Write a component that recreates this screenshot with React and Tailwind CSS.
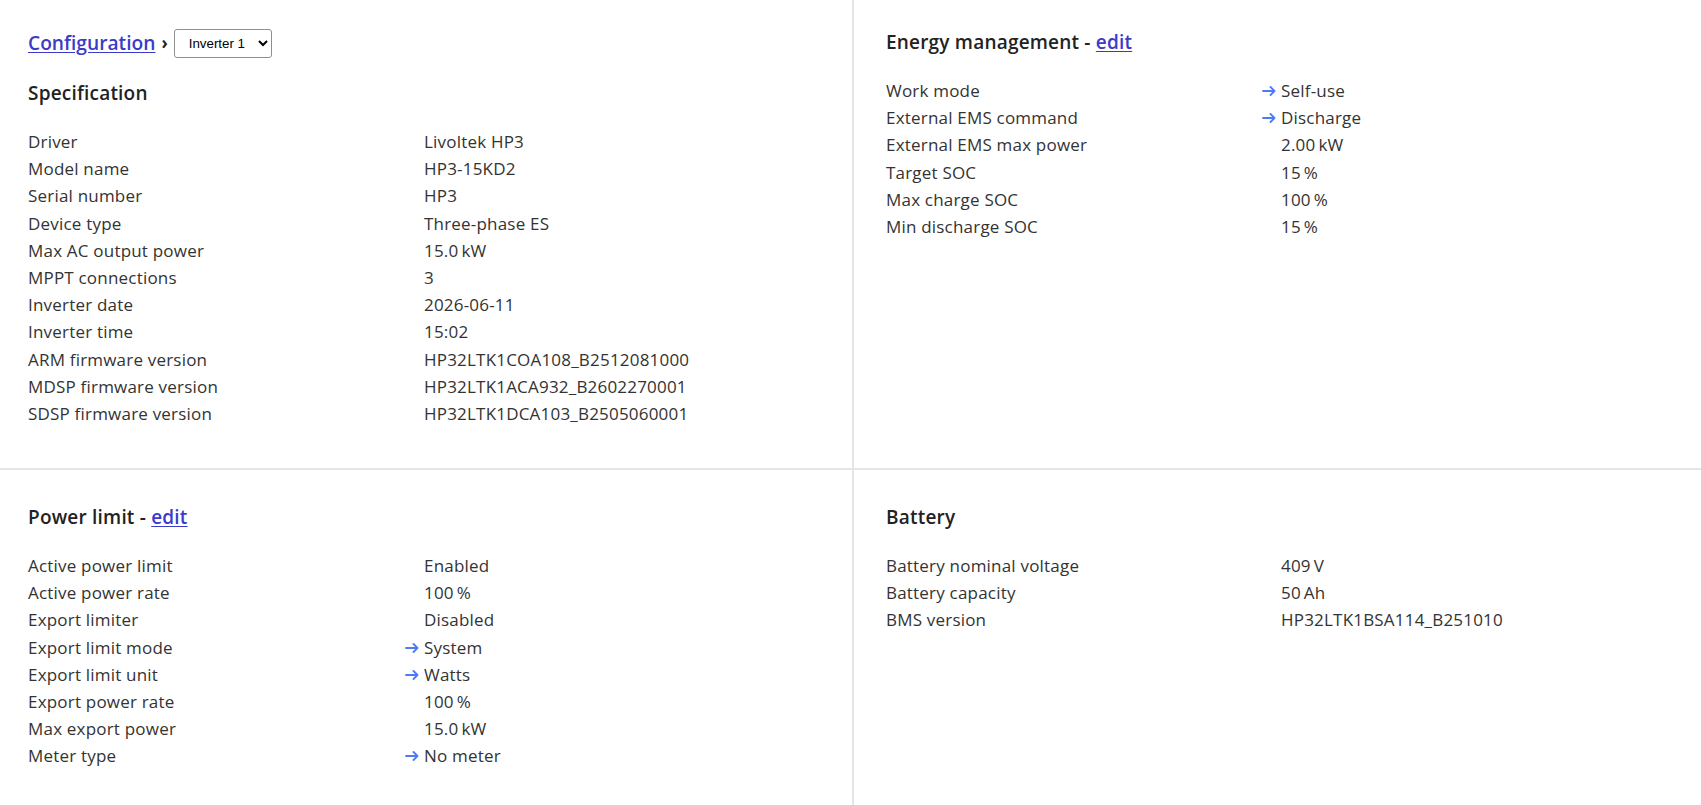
import React from "react";

const F = { fontFamily: "'Open Sans', 'Noto Sans', sans-serif" };

function Arrow() {
  return (
    <svg
      className="absolute right-full mr-[5px] top-[9px]"
      width="14"
      height="10"
      viewBox="0 0 14 10"
      fill="none"
      stroke="#4b7bf5"
      strokeWidth="1.8"
      strokeLinecap="round"
      strokeLinejoin="round"
    >
      <path d="M1 5h11.5M8.5 1l4 4-4 4" />
    </svg>
  );
}

function Row({ label, value, arrow }) {
  return (
    <>
      <div className="leading-[27.2px]">{label}</div>
      <div className="relative leading-[27.2px]">
        {arrow && <Arrow />}
        {value}
      </div>
    </>
  );
}

function Table({ rows, col }) {
  return (
    <div className={`grid ${col} text-[17px] tracking-[0.2px] text-[#333]`}>
      {rows.map((r) => (
        <Row key={r[0]} label={r[0]} value={r[1]} arrow={r[2]} />
      ))}
    </div>
  );
}

const T = "\u2009";

const spec = [
  ["Driver", "Livoltek HP3"],
  ["Model name", "HP3-15KD2"],
  ["Serial number", "HP3"],
  ["Device type", "Three-phase ES"],
  ["Max AC output power", `15.0${T}kW`],
  ["MPPT connections", "3"],
  ["Inverter date", "2026-06-11"],
  ["Inverter time", "15:02"],
  ["ARM firmware version", "HP32LTK1COA108_B2512081000"],
  ["MDSP firmware version", "HP32LTK1ACA932_B2602270001"],
  ["SDSP firmware version", "HP32LTK1DCA103_B2505060001"],
];

const energy = [
  ["Work mode", "Self-use", true],
  ["External EMS command", "Discharge", true],
  ["External EMS max power", `2.00${T}kW`],
  ["Target SOC", `15${T}%`],
  ["Max charge SOC", `100${T}%`],
  ["Min discharge SOC", `15${T}%`],
];

const power = [
  ["Active power limit", "Enabled"],
  ["Active power rate", `100${T}%`],
  ["Export limiter", "Disabled"],
  ["Export limit mode", "System", true],
  ["Export limit unit", "Watts", true],
  ["Export power rate", `100${T}%`],
  ["Max export power", `15.0${T}kW`],
  ["Meter type", "No meter", true],
];

const battery = [
  ["Battery nominal voltage", `409${T}V`],
  ["Battery capacity", `50${T}Ah`],
  ["BMS version", "HP32LTK1BSA114_B251010"],
];

function Heading({ children }) {
  return (
    <h3 className="text-[19px] tracking-[0.2px] leading-[27px] font-semibold text-[#222]">
      {children}
    </h3>
  );
}

function Edit() {
  return (
    <a href="#" className="text-[#3b3bc9] underline underline-offset-2">
      edit
    </a>
  );
}

export default function App() {
  return (
    <div
      className="min-h-[805px] w-full grid grid-cols-[852px_1fr] grid-rows-[468px_1fr] gap-[2px] bg-[#e5e5e5]"
      style={F}
    >
      <div className="bg-white pl-[28px] pt-[28px]">
        <div className="flex items-center h-[30px]">
          <a
            href="#"
            className="text-[19.2px] font-semibold text-[#3b3bc9] underline underline-offset-2"
          >
            Configuration
          </a>
          <span className="ml-[6px] mr-[6px] text-[17px] font-bold text-[#222]">›</span>
          <select
            className="h-[29px] w-[98px] border border-[#8f8f8f] rounded-[3px] pl-[10px] text-[13.33px] text-black bg-white"
            style={{ fontFamily: "'Liberation Sans', Arial, sans-serif" }}
            defaultValue="1"
          >
            <option value="1">Inverter 1</option>
          </select>
        </div>
        <div className="mt-[22px]">
          <Heading>Specification</Heading>
        </div>
        <div className="mt-[21px]">
          <Table rows={spec} col="grid-cols-[396px_1fr]" />
        </div>
      </div>

      <div className="bg-white pl-[32px] pt-[29px]">
        <Heading>
          Energy management - <Edit />
        </Heading>
        <div className="mt-[21px]">
          <Table rows={energy} col="grid-cols-[395px_1fr]" />
        </div>
      </div>

      <div className="bg-white pl-[28px] pt-[34px]">
        <Heading>
          Power limit - <Edit />
        </Heading>
        <div className="mt-[21px]">
          <Table rows={power} col="grid-cols-[396px_1fr]" />
        </div>
      </div>

      <div className="bg-white pl-[32px] pt-[34px]">
        <Heading>Battery</Heading>
        <div className="mt-[21px]">
          <Table rows={battery} col="grid-cols-[395px_1fr]" />
        </div>
      </div>
    </div>
  );
}
